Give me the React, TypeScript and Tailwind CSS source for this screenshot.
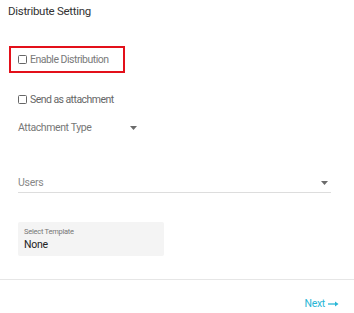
import React from "react";

function Caret() {
  return (
    <svg width="7" height="4" viewBox="0 0 7 4" className="block">
      <path d="M0 0 L7 0 L3.5 4 Z" fill="#6b6b6b" />
    </svg>
  );
}

function Box() {
  return <span className="inline-block w-[9px] h-[9px] border border-[#666] rounded-[1.5px] bg-white shrink-0" />;
}

export default function App() {
  return (
    <div className="w-[354px] h-[313px] bg-white relative overflow-hidden" style={{ fontFamily: "Roboto, 'Liberation Sans', sans-serif" }}>
      <div className="pl-[8px] pt-[4px] text-[11.5px] tracking-[-0.3px] leading-[14px] text-[#333]">Distribute Setting</div>
      <div className="ml-[9px] mt-[28px] w-[116px] h-[27px] border-2 border-[#e3101a] flex items-center pl-[7px] gap-[3px]">
        <Box />
        <span className="text-[10.5px] tracking-[-0.5px] text-[#7a7a7a] leading-[13px]">Enable Distribution</span>
      </div>
      <div className="ml-[18px] mt-[20px] flex items-center gap-[3px]">
        <Box />
        <span className="text-[10.5px] tracking-[-0.55px] text-[#666] leading-[13px]">Send as attachment</span>
      </div>
      <div className="ml-[18px] mt-[15px] w-[119px] flex items-center justify-between">
        <span className="text-[10.5px] tracking-[-0.4px] text-[#777] leading-[13px]">Attachment Type</span>
        <Caret />
      </div>
      <div className="ml-[18px] mt-[42px] w-[313px] border-b border-[#ddd] pb-[3px] flex items-center justify-between pr-[3px]">
        <span className="text-[10.5px] tracking-[-0.3px] text-[#888] leading-[13px]">Users</span>
        <Caret />
      </div>
      <div className="ml-[18px] mt-[29px] w-[146px] h-[34px] bg-[#f4f4f4] rounded-[2px] pl-[6px] pt-[5px]">
        <div className="text-[7.5px] tracking-[-0.25px] text-[#777] leading-[10px]">Select Template</div>
        <div className="text-[10.5px] tracking-[-0.3px] text-[#222] leading-[14px] mt-[1px]">None</div>
      </div>
      <div className="mt-[23px] border-t border-[#e6e6e6]" />
      <div className="flex justify-end pr-[15px] mt-[17px]">
        <span className="text-[10.5px] tracking-[-0.3px] text-[#29b6d6] leading-[13px] flex items-center gap-[3px]">
          Next
          <svg width="11" height="6" viewBox="0 0 11 6">
            <path d="M0 3 H9" stroke="#29b6d6" strokeWidth="1.3" />
            <path d="M7 0.5 L10.5 3 L7 5.5 Z" fill="#29b6d6" />
          </svg>
        </span>
      </div>
    </div>
  );
}
